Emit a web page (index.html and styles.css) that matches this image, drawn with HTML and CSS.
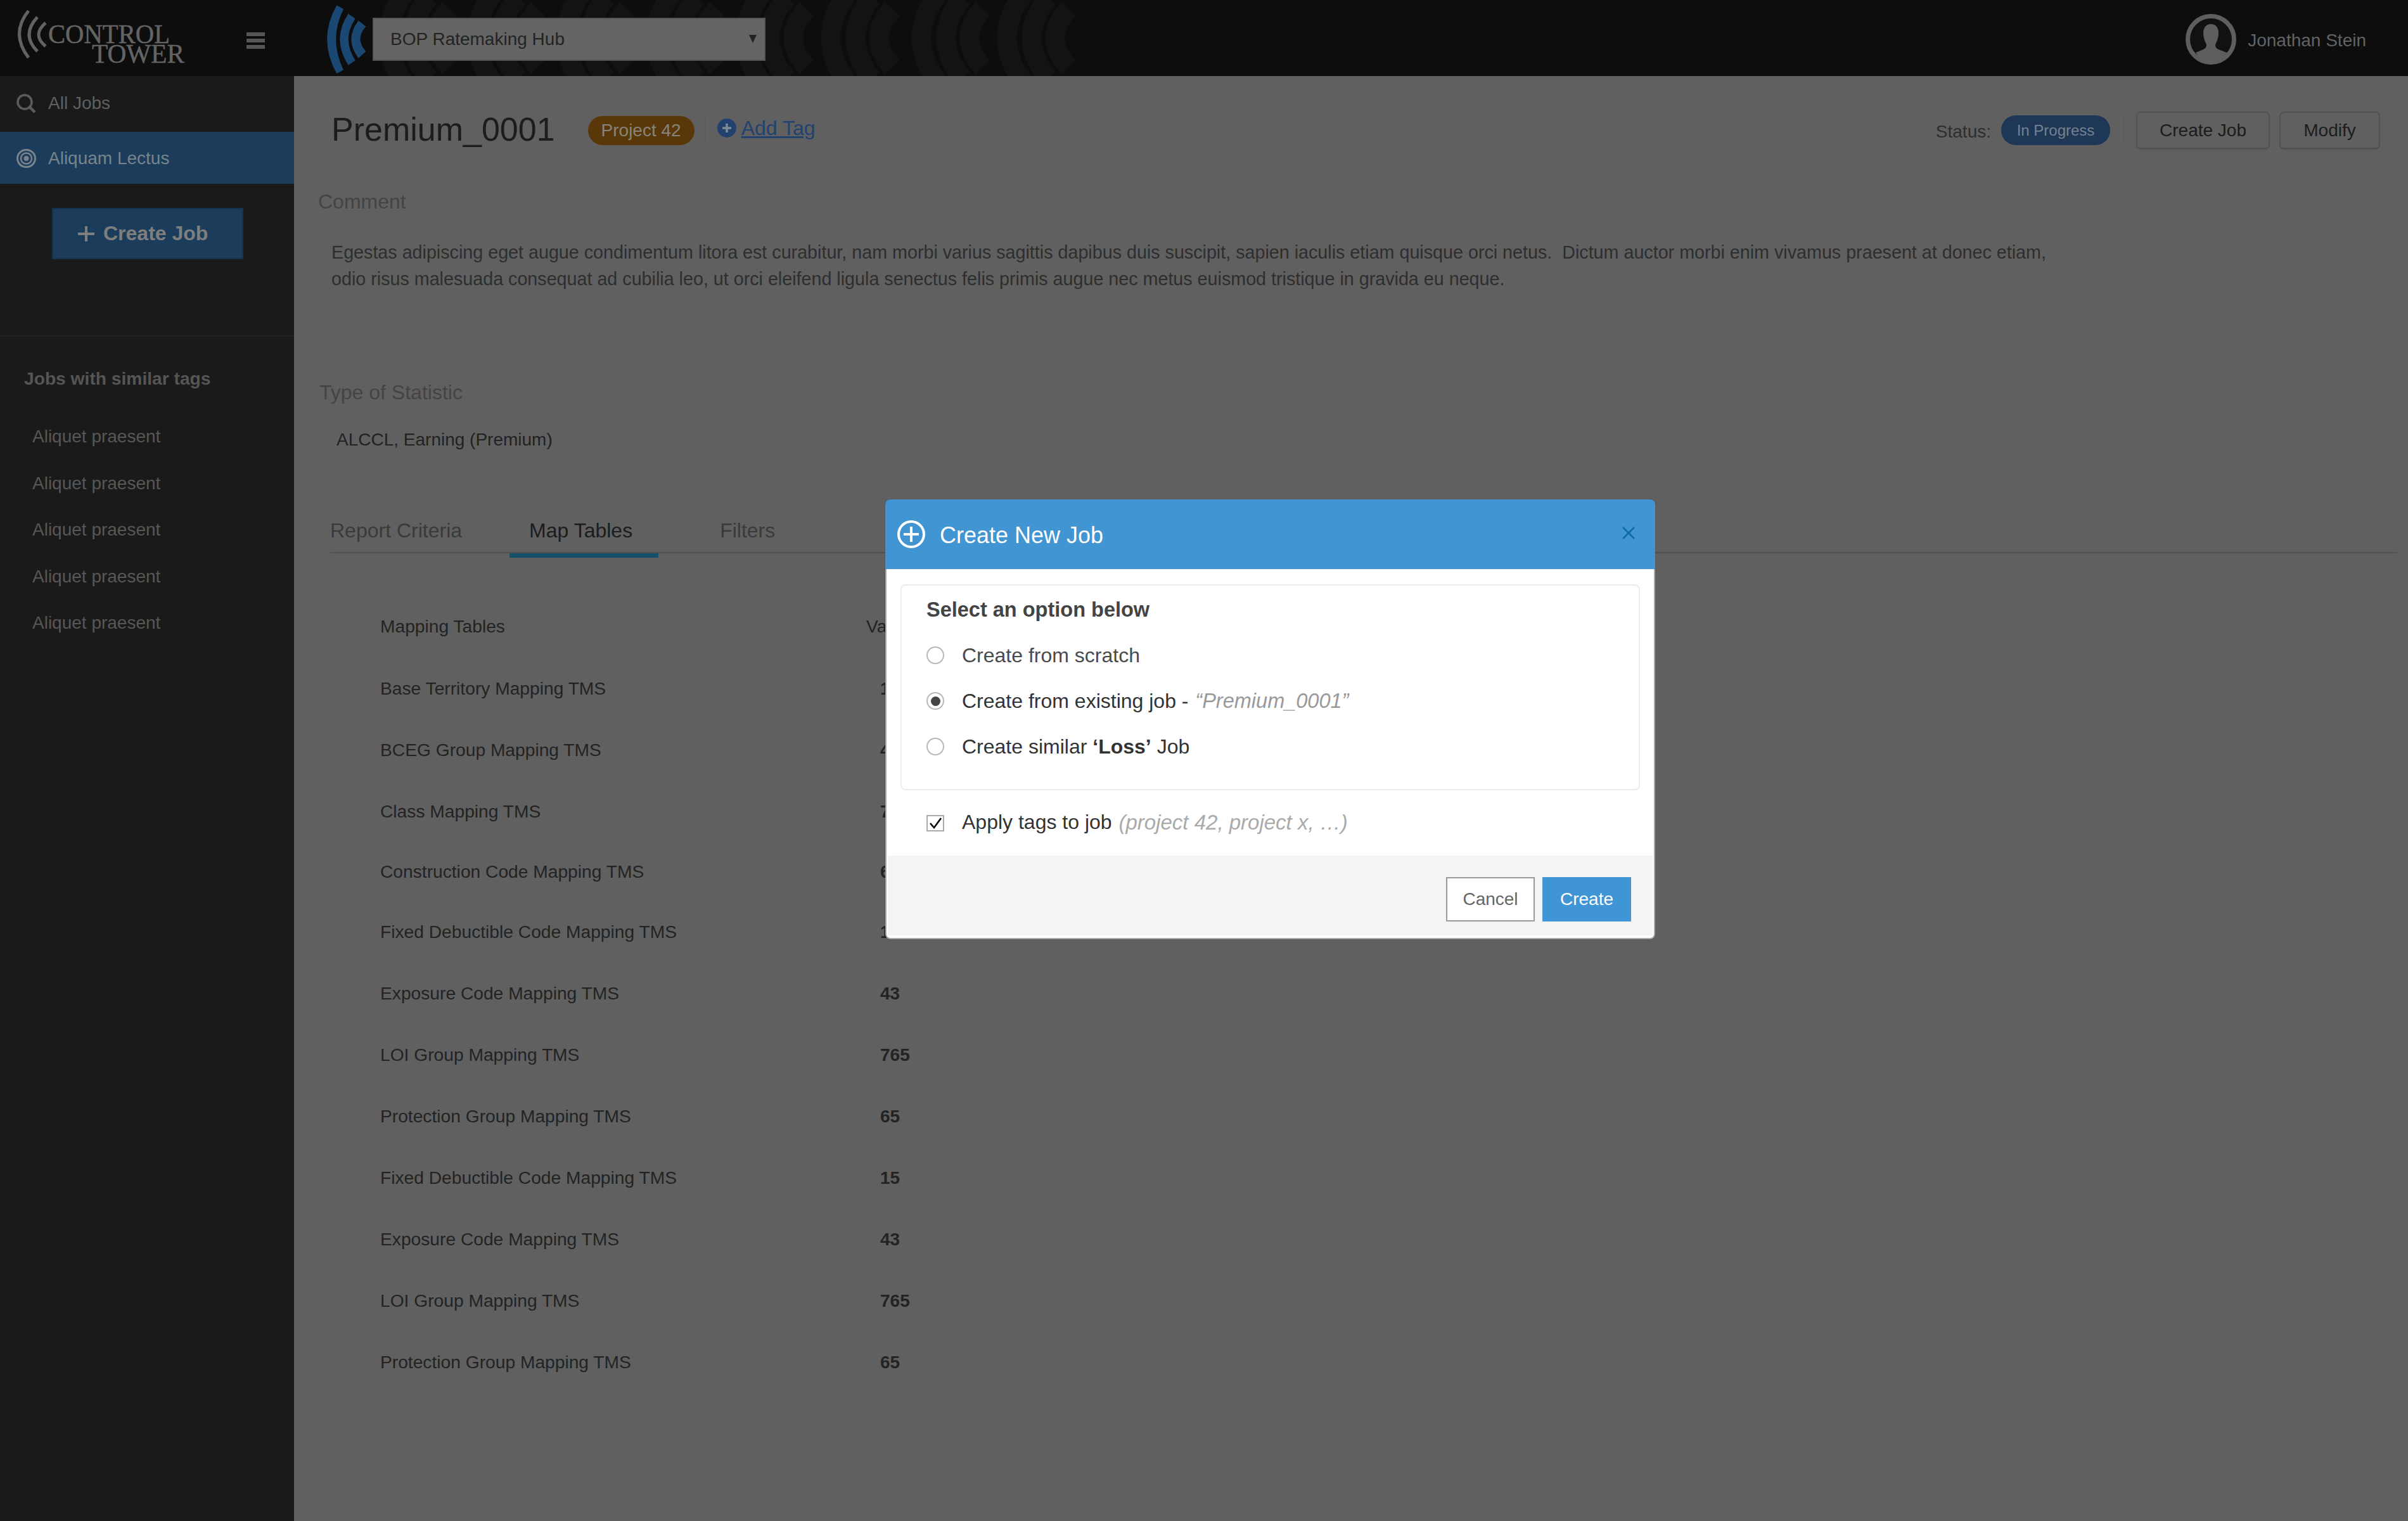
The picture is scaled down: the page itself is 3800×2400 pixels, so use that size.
FILE: index.html
```html
<!DOCTYPE html>
<html lang="en">
<head>
<meta charset="utf-8">
<title>Control Tower</title>
<link rel="stylesheet" href="styles.css">
</head>
<body>
<div class="page">
  <header class="topbar">
    <svg class="watermark" viewBox="600 0 1100 120" aria-hidden="true">
      <defs>
        <g id="wave" fill="none" stroke="#131313" stroke-width="31">
          <path d="M36 -14 Q-22 60 36 134"/>
          <path d="M72 -4 Q20 60 72 124"/>
          <path d="M104 14 Q62 60 104 106"/>
        </g>
      </defs>
      <use href="#wave" x="605"/><use href="#wave" x="745"/><use href="#wave" x="885"/><use href="#wave" x="1027"/>
      <use href="#wave" x="1169"/><use href="#wave" x="1304"/><use href="#wave" x="1447"/><use href="#wave" x="1582"/>
    </svg>
    <div class="brand">
      <svg class="logo" viewBox="0 0 300 120" role="img" aria-label="Control Tower">
        <g fill="none" stroke="#626262" stroke-width="5">
          <path d="M45 17 Q16 53 45 91"/>
          <path d="M59 27 Q33 55 59 81"/>
          <path d="M72 36 Q50 55 72 73"/>
        </g>
        <text class="logo-word" x="76" y="68" textLength="192" lengthAdjust="spacingAndGlyphs">CONTROL</text>
        <text class="logo-word" x="145" y="99" textLength="146" lengthAdjust="spacingAndGlyphs">TOWER</text>
      </svg>
      <div class="hamburger"><span></span><span></span><span></span></div>
    </div>
    <svg class="hub-logo" viewBox="100 24 195 326" aria-hidden="true">
      <g fill="#1a4872">
        <path d="M155 24 L187 42 Q116 185 187 330 L155 348 Q64 185 155 24Z"/>
        <path d="M210 65 L243 88 Q178 185 243 285 L210 308 Q130 185 210 65Z"/>
        <path d="M258 97 L293 125 Q240 185 293 243 L258 275 Q190 185 258 97Z"/>
      </g>
    </svg>
    <div class="hub-select">BOP Ratemaking Hub<span class="hub-arrow"></span></div>
    <div class="user">
      <svg class="avatar" viewBox="0 0 80 80" aria-hidden="true">
        <circle cx="40" cy="40" r="36.5" fill="#111" stroke="#5e5e5e" stroke-width="7"/>
        <path fill="#5e5e5e" d="M40 16 C32 16 28 22 28 30 C28 38 31 44 33 48 C33 52 32 54 28 56 L16 61 C21 70 30 76 40 76 C50 76 60 70 65 61 L52 56 C48 54 47 52 47 48 C49 44 52 38 52 30 C52 22 48 16 40 16Z"/>
      </svg>
      <span class="user-name">Jonathan Stein</span>
    </div>
  </header>

  <div class="main">
    <aside class="sidebar">
      <a class="side-link">
        <svg class="side-icon" viewBox="0 0 31 30" aria-hidden="true"><circle cx="13" cy="13" r="11" fill="none" stroke="#5c5c5c" stroke-width="3.5"/><path d="M21 21 L29 29" stroke="#5c5c5c" stroke-width="4.5"/></svg>
        <span>All Jobs</span>
      </a>
      <a class="side-link side-link-active">
        <svg class="side-icon" viewBox="0 0 31 30" aria-hidden="true"><g fill="none" stroke="#78838c"><ellipse cx="15.5" cy="15" rx="14" ry="13.5" stroke-width="3"/><circle cx="15.5" cy="15" r="8.5" stroke-width="2.5"/></g><circle cx="15.5" cy="15" r="4" fill="#78838c"/></svg>
        <span>Aliquam Lectus</span>
      </a>
      <button class="side-create">
        <svg class="side-plus" viewBox="0 0 26 24" aria-hidden="true"><path d="M13 0V24M0 12H26" stroke="#7e7e7e" stroke-width="4"/></svg>
        <span>Create Job</span>
      </button>
      <section class="similar">
        <h2 class="similar-title">Jobs with similar tags</h2>
        <ul class="similar-list">
          <li>Aliquet praesent</li>
          <li>Aliquet praesent</li>
          <li>Aliquet praesent</li>
          <li>Aliquet praesent</li>
          <li>Aliquet praesent</li>
        </ul>
      </section>
    </aside>

    <main class="content">
      <div class="title-row">
        <h1 class="job-title">Premium_0001</h1>
        <span class="pill pill-tag">Project 42</span>
        <span class="rule"></span>
        <svg class="add-icon" viewBox="0 0 30 30" aria-hidden="true"><circle cx="15" cy="15" r="15" fill="#21426f"/><path d="M15 8V22M8 15H22" stroke="#7f8a96" stroke-width="3.5"/></svg>
        <a class="add-tag">Add Tag</a>
        <div class="title-actions">
          <span class="status-label">Status:</span>
          <span class="pill pill-status">In Progress</span>
          <span class="rule rule-right"></span>
          <button class="ghost ghost-create">Create Job</button>
          <button class="ghost ghost-modify">Modify</button>
        </div>
      </div>

      <h3 class="field-label field-comment">Comment</h3>
      <p class="comment">Egestas adipiscing eget augue condimentum litora est curabitur, nam morbi varius sagittis dapibus duis suscipit, sapien iaculis etiam quisque orci netus.&nbsp; Dictum auctor morbi enim vivamus praesent at donec etiam,<br>odio risus malesuada consequat ad cubilia leo, ut orci eleifend ligula senectus felis primis augue nec metus euismod tristique in gravida eu neque.</p>

      <h3 class="field-label field-type">Type of Statistic</h3>
      <p class="stat-value">ALCCL, Earning (Premium)</p>

      <nav class="tabs">
        <a class="tab">Report Criteria</a>
        <a class="tab tab-active">Map Tables</a>
        <a class="tab">Filters</a>
      </nav>

      <div class="map-table">
        <div class="map-row map-head"><span>Mapping Tables</span><span>Value</span></div>
        <div class="map-row"><span>Base Territory Mapping TMS</span><b>15</b></div>
        <div class="map-row"><span>BCEG Group Mapping TMS</span><b>43</b></div>
        <div class="map-row"><span>Class Mapping TMS</span><b>765</b></div>
        <div class="map-row map-row-short"><span>Construction Code Mapping TMS</span><b>65</b></div>
        <div class="map-row"><span>Fixed Debuctible Code Mapping TMS</span><b>15</b></div>
        <div class="map-row"><span>Exposure Code Mapping TMS</span><b>43</b></div>
        <div class="map-row"><span>LOI Group Mapping TMS</span><b>765</b></div>
        <div class="map-row"><span>Protection Group Mapping TMS</span><b>65</b></div>
        <div class="map-row"><span>Fixed Debuctible Code Mapping TMS</span><b>15</b></div>
        <div class="map-row"><span>Exposure Code Mapping TMS</span><b>43</b></div>
        <div class="map-row"><span>LOI Group Mapping TMS</span><b>765</b></div>
        <div class="map-row"><span>Protection Group Mapping TMS</span><b>65</b></div>
      </div>
    </main>
  </div>

  <div class="modal">
    <div class="modal-head">
      <svg class="modal-icon" viewBox="0 0 44 44" aria-hidden="true"><circle cx="22" cy="22" r="20" fill="none" stroke="#fff" stroke-width="4"/><path d="M22 10V34M10 22H34" stroke="#fff" stroke-width="4"/></svg>
      <span class="modal-title">Create New Job</span>
      <svg class="modal-close" viewBox="0 0 20 20" aria-hidden="true"><path d="M1 1L19 19M19 1L1 19" stroke="#0f6aa8" stroke-width="2.6"/></svg>
    </div>
    <div class="modal-body">
      <div class="option-panel">
        <div class="option-title">Select an option below</div>
        <label class="option option-muted"><span class="radio"></span>Create from scratch</label>
        <label class="option"><span class="radio radio-on"></span>Create from existing job -&nbsp;<em class="hint-dark">“Premium_0001”</em></label>
        <label class="option"><span class="radio"></span>Create similar&nbsp;<b>‘Loss’</b>&nbsp;Job</label>
      </div>
      <label class="apply">
        <svg class="check" viewBox="0 0 28 26" aria-hidden="true"><rect x="1" y="1" width="26" height="24" fill="#fff" stroke="#aaa" stroke-width="2"/><path d="M6 13L12 20L23 5" fill="none" stroke="#000" stroke-width="2.6"/></svg>
        <span class="apply-text">Apply tags to job&nbsp;</span><em class="hint">(project 42, project x, …)</em>
      </label>
      <div class="modal-foot">
        <button class="btn btn-cancel">Cancel</button>
        <button class="btn btn-create">Create</button>
      </div>
    </div>
  </div>
</div>
</body>
</html>
```
FILE: styles.css
```css
* { box-sizing: border-box; }
html, body { margin: 0; padding: 0; }
body { font-family: "Liberation Sans", Arial, sans-serif; font-size: 28px; color: #222; background: #606060; }
h1, h2, h3, p, ul { margin: 0; padding: 0; font-weight: normal; }
ul { list-style: none; }
button { font-family: inherit; cursor: pointer; }

.page { position: relative; width: 3800px; height: 2400px; overflow: hidden; display: flex; flex-direction: column; }

/* Top bar */
.topbar { position: relative; flex: 0 0 120px; display: flex; align-items: center; background: #0d0d0d; }
.watermark { position: absolute; left: 600px; top: 0; width: 1100px; height: 120px; }
.brand { position: relative; flex: 0 0 464px; height: 120px; display: flex; align-items: center; }
.logo { width: 300px; height: 120px; }
.logo-word { font-family: "Liberation Serif", serif; font-size: 42px; fill: #646464; stroke: #646464; stroke-width: .5px; }
.hamburger { margin-left: 89px; width: 29px; display: flex; flex-direction: column; gap: 4px; margin-top: 8px; }
.hamburger span { display: block; height: 6px; background: #565656; }
.hub-logo { position: relative; width: 65px; height: 109px; margin-left: 49px; margin-top: 5px; }
.hub-select { position: relative; margin-left: 10px; margin-top: 4px; width: 620px; height: 68px; padding-left: 26px; background: #656565; border: 2px solid #555; line-height: 64px; color: #232323; }
.hub-arrow { position: absolute; right: 12px; top: 25px; border-style: solid; border-width: 13px 6px 0; border-color: #222 transparent transparent; }
.user { margin-left: auto; margin-right: 66px; display: flex; align-items: center; margin-top: 4px; }
.avatar { width: 80px; height: 80px; }
.user-name { margin-left: 18px; color: #636363; line-height: 40px; margin-top: 4px; }

/* Layout */
.main { flex: 1; display: flex; min-height: 0; }

/* Sidebar */
.sidebar { flex: 0 0 464px; background: #1a1a1a; display: flex; flex-direction: column; }
.side-link { height: 82px; display: flex; align-items: center; padding-left: 26px; color: #606060; }
.side-link:first-child { height: 86px; margin-bottom: 2px; }
.side-icon { width: 31px; height: 30px; margin-right: 19px; }
.side-link-active { background: #1b3d5b; color: #78838c; padding-top: 1px; }
.side-create { margin: 38px 0 0 82px; width: 302px; height: 81px; flex: none; background: #1b3d5b; border: 2px solid #133350; display: flex; align-items: center; padding: 0 0 0 39px; color: #7e7e7e; font-size: 32px; font-weight: bold; }
.side-plus { width: 26px; height: 24px; margin-right: 14px; }
.similar { margin-top: 120px; border-top: 2px solid #202020; }
.similar-title { margin: 46px 0 0 38px; font-size: 28.2px; line-height: 40px; font-weight: bold; color: #555; }
.similar-list { margin-top: 35px; padding-left: 51px; color: #575757; }
.similar-list li { height: 73.5px; line-height: 73.5px; }

/* Content */
.content { flex: 1; min-width: 0; background: #606060; }
.title-row { margin-top: 56px; height: 60px; display: flex; align-items: center; padding: 0 44px 0 59px; }
.job-title { font-size: 52px; line-height: 60px; color: #1c1c1c; margin-top: -4px; }
.pill { border-radius: 23px; display: flex; align-items: center; justify-content: center; }
.pill-tag { margin-left: 52px; width: 168px; height: 46px; background: #5a3708; color: #85857c; margin-top: -1px; }
.rule { width: 1px; height: 40px; background: #5a5a5a; }
.pill-tag + .rule { margin-left: 16px; }
.add-icon { width: 30px; height: 30px; margin: -8px 0 0 19px; }
.add-tag { margin: -8px 0 0 8px; font-size: 32px; line-height: 36px; color: #21426f; text-decoration: underline; }
.title-actions { margin-left: auto; display: flex; align-items: center; }
.status-label { color: #2e2e2e; margin: 4px 16px 0 0; }
.pill-status { width: 172px; height: 47px; background: #1e3757; color: #75828f; font-size: 24px; margin-top: -1px; }
.rule-right { margin-left: 21px; }
.ghost { height: 60px; background: transparent; border: 2px solid #525252; border-bottom-width: 3px; border-radius: 7px; color: #1c1c1c; font-size: 28px; padding: 0; }
.ghost-create { margin-left: 19px; width: 211px; }
.ghost-modify { margin-left: 15px; width: 159px; }

.field-label { font-size: 32px; line-height: 42px; color: #444; margin-left: 38px; }
.field-comment { margin-top: 61px; }
.comment { margin: 38px 0 0 59px; font-size: 28.7px; line-height: 42px; color: #2e2e2e; white-space: nowrap; }
.field-type { margin-top: 137px; margin-left: 40px; }
.stat-value { margin: 33px 0 0 67px; line-height: 42px; color: #222; }

.tabs { margin: 67px 17px 0 57px; height: 91px; display: flex; align-items: flex-start; border-bottom: 2px solid #505050; font-size: 32px; color: #3a3a3a; }
.tabs .tab { height: 98px; padding-top: 35px; line-height: 40px; margin-right: 75px; }
.tabs .tab-active { padding: 35px 41px 0 31px; margin-right: 97px; color: #1c1c1c; border-bottom: 7px solid #154f68; }

.map-table { margin: 66px 0 0 136px; font-size: 28.2px; }
.map-row { height: 97px; display: grid; grid-template-columns: 767px auto; align-items: center; color: #232323; }
.map-row b { padding-left: 22px; font-size: 28px; }
.map-head { height: 99px; }
.map-row-short { height: 93px; }

/* Modal */
.modal { position: absolute; left: 1397px; top: 788px; width: 1215px; border-radius: 8px; box-shadow: 0 0 2px rgba(0,0,0,.2); }
.modal-head { height: 110px; display: flex; align-items: center; padding: 0 32px 0 19px; background: #4195d3; border-radius: 8px 8px 0 0; color: #fff; }
.modal-icon { width: 44px; height: 44px; }
.modal-title { margin-left: 23px; font-size: 36px; margin-top: 3px; }
.modal-close { width: 20px; height: 20px; margin-left: auto; margin-top: -4px; }
.modal-body { background: #fff; border: solid #a8a8a8; border-width: 0 2px 2px; border-radius: 0 0 8px 8px; padding: 24px 0 4px; color: #333; font-size: 32px; }
.option-panel { margin: 0 22px; height: 325px; border: 2px solid #ececec; border-radius: 8px; padding: 18px 0 0 39px; }
.option-title { font-size: 32.5px; font-weight: bold; color: #444; line-height: 40px; margin-bottom: 16px; }
.option { height: 72px; display: flex; align-items: center; }
.option-muted { color: #4a4a4a; }
.radio { flex: none; width: 28px; height: 28px; margin-right: 28px; border: 2px solid #b8b8b8; border-radius: 50%; display: flex; align-items: center; justify-content: center; background: #fff; }
.radio-on::after { content: ""; width: 15px; height: 15px; border-radius: 50%; background: #444; }
.hint-dark { color: #999; font-size: 32.5px; margin-left: 2px; }
.hint { color: #aaa; font-size: 33px; margin-left: 2px; }
.apply { height: 103px; margin-left: 63px; display: flex; align-items: center; }
.apply-text, .hint { margin-top: -2px; }
.check { width: 28px; height: 26px; margin-right: 28px; }
.modal-foot { height: 126px; margin: 0 2px; background: #f4f4f4; display: flex; justify-content: flex-end; align-items: flex-start; padding: 34px 34px 0 0; gap: 12px; }
.btn { width: 140px; height: 70px; font-size: 28px; border: 0; padding: 0; }
.btn-cancel { background: #fff; border: 2px solid #999; color: #666; }
.btn-create { background: #3f95d5; color: #fff; }
```
